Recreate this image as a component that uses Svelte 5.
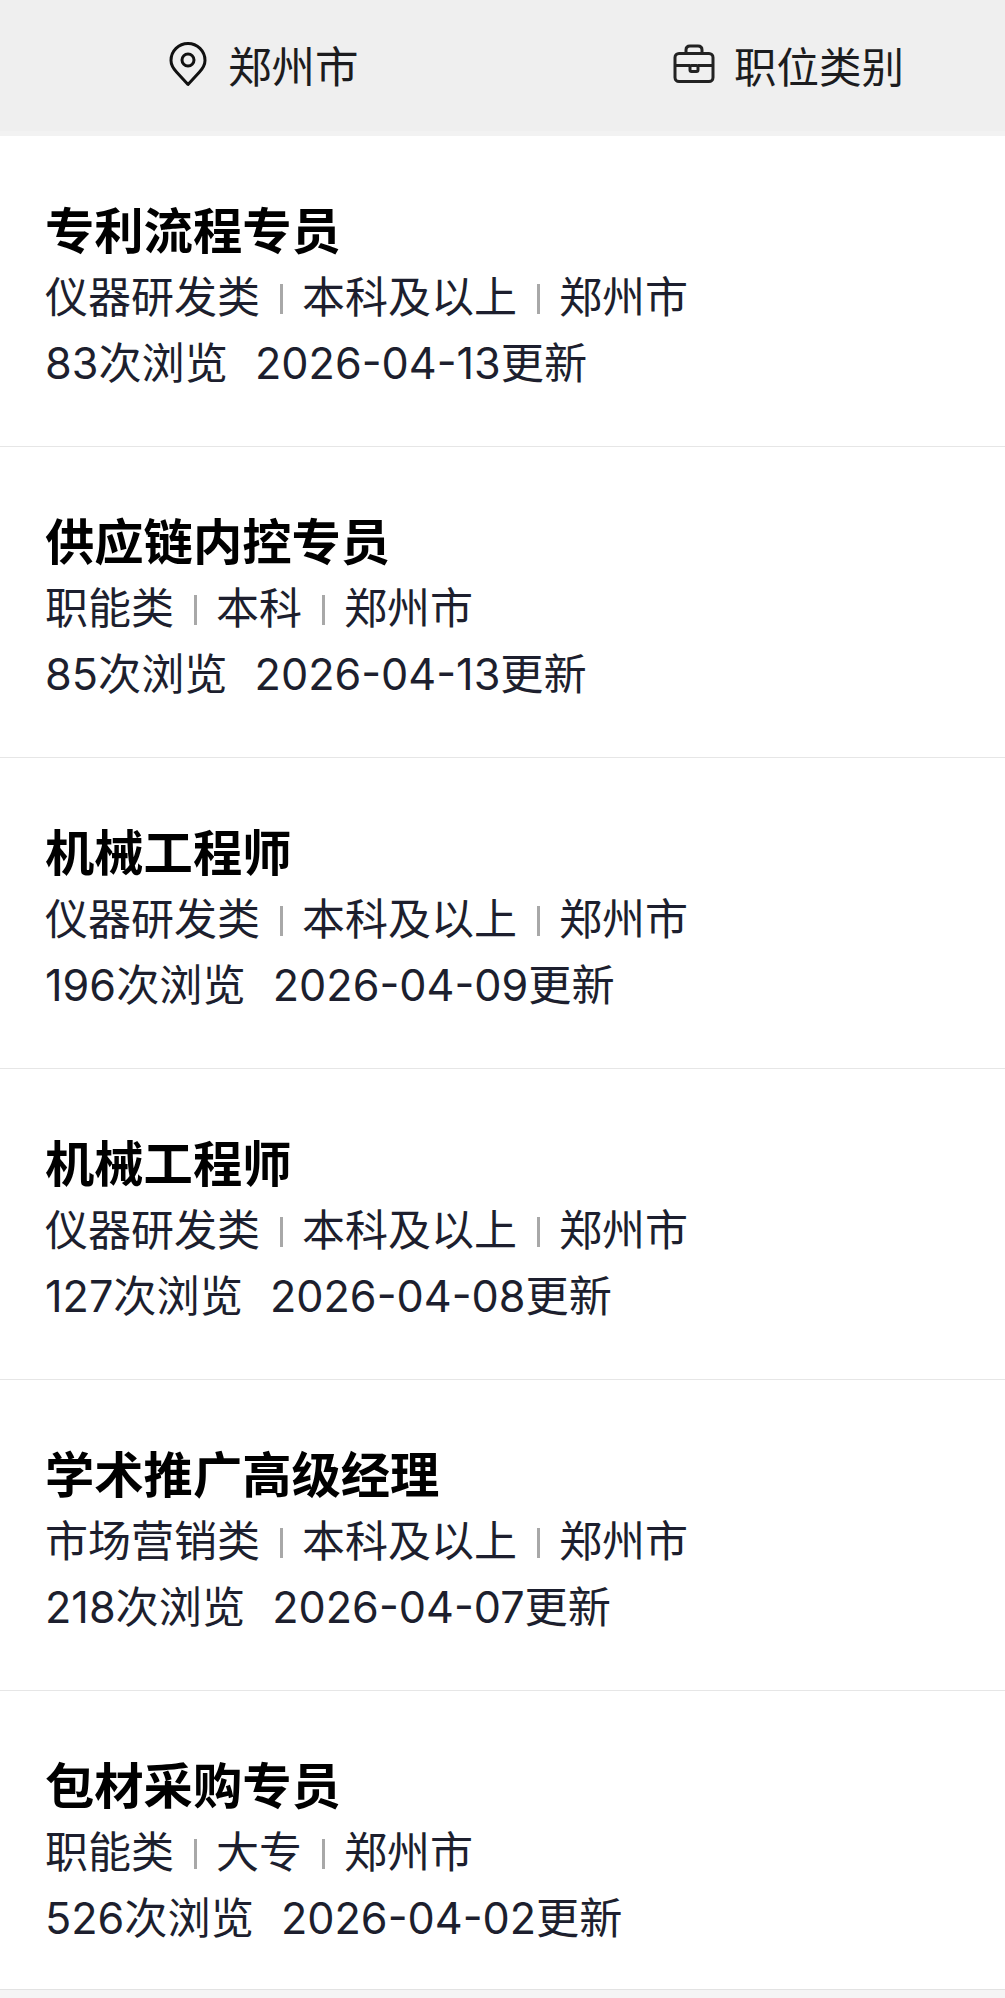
<script>
  const jobs = [
    { title: '专利流程专员', tags: ['仪器研发类', '本科及以上', '郑州市'], views: 83, date: '2026-04-13' },
    { title: '供应链内控专员', tags: ['职能类', '本科', '郑州市'], views: 85, date: '2026-04-13' },
    { title: '机械工程师', tags: ['仪器研发类', '本科及以上', '郑州市'], views: 196, date: '2026-04-09' },
    { title: '机械工程师', tags: ['仪器研发类', '本科及以上', '郑州市'], views: 127, date: '2026-04-08' },
    { title: '学术推广高级经理', tags: ['市场营销类', '本科及以上', '郑州市'], views: 218, date: '2026-04-07' },
    { title: '包材采购专员', tags: ['职能类', '大专', '郑州市'], views: 526, date: '2026-04-02' }
  ];
</script>

<div class="page">
  <header class="filters">
    <div class="filter city">
      <svg width="38" height="46" viewBox="0 0 38 46" fill="none" stroke="#111" stroke-width="3" stroke-linejoin="round">
        <path d="M19 43.500 L7.500 31 C4.500 27.700 2 24 2 19.500 C2 10 9.700 2.500 19 2.500 C28.300 2.500 36 10 36 19.500 C36 24 33.500 27.700 30.500 31 Z" />
        <circle cx="19" cy="19" r="6" />
      </svg>
      <span>郑州市</span>
    </div>
    <div class="filter category">
      <svg width="42" height="40" viewBox="0 0 42 40" fill="none" stroke="#222" stroke-width="3" stroke-linejoin="round">
        <rect x="2" y="9.500" width="38" height="28" rx="4" />
        <path d="M13 9.500 V6 C13 3.500 14.500 2 17 2 H25 C27.500 2 29 3.500 29 6 V9.500" />
        <path d="M2 21.500 H17 M25 21.500 H40" />
        <rect x="17" y="21.500" width="8" height="6" rx="1.500" />
      </svg>
      <span>职位类别</span>
    </div>
  </header>

  <ul class="jobs">
    {#each jobs as job}
      <li class="job">
        <h3>{job.title}</h3>
        <p class="tags">
          {#each job.tags as tag, i}
            {#if i > 0}<i class="sep"></i>{/if}<span>{tag}</span>
          {/each}
        </p>
        <p class="meta"><span class="views">{job.views}次浏览</span><span>{job.date}更新</span></p>
      </li>
    {/each}
  </ul>
</div>

<style>
  :global(body) {
    margin: 0;
    background: #f5f5f5;
  }

  .page {
    font-family: "Inter", "Noto Sans CJK SC", sans-serif;
    height: 1998px;
    overflow: hidden;
  }

  .filters {
    display: flex;
    box-sizing: border-box;
    height: 136px;
    background: #efefef;
    border-bottom: 5px solid #f2f2f2;
    color: #1c1c1e;
    font-size: 43.5px;
  }

  .filter {
    display: flex;
    align-items: center;
    gap: 21px;
    height: 128px;
  }

  .city {
    padding-left: 169px;
    width: 673px;
    box-sizing: border-box;
  }

  .category {
    gap: 19px;
    font-size: 42.500px;
  }

  .jobs {
    list-style: none;
    margin: 0;
    padding: 0;
  }

  .job {
    box-sizing: border-box;
    height: 311px;
    padding: 63px 45px 0;
    background: #fff;
    border-bottom: 1px solid #e6e6e6;
  }

  .job:last-child {
    height: 299px;
    border-bottom-color: #e2e2e2;
  }

  h3 {
    margin: 0;
    font-size: 49.300px;
    line-height: 65px;
    font-weight: 700;
    color: #000;
  }

  p {
    margin: 0;
    font-size: 43.200px;
    line-height: 66px;
    color: #1d1f2e;
  }

  .tags {
    display: flex;
    align-items: center;
    font-size: 43px;
  }

  .sep {
    width: 3px;
    height: 30px;
    background: #a8a8a8;
    margin: 4px 19px 0 20px;
  }

  .views {
    margin-right: 27px;
  }
</style>
